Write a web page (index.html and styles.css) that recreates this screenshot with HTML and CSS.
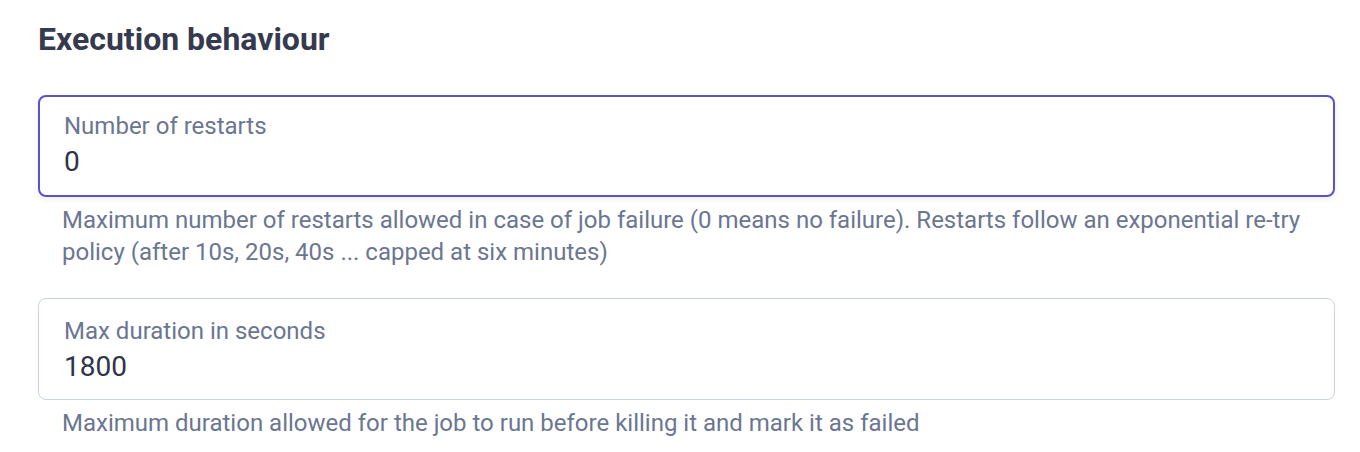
FILE: index.html
```html
<!DOCTYPE html>
<html>
<head>
<meta charset="utf-8">
<link rel="stylesheet" href="styles.css">
</head>
<body>
<section class="section">
  <h2 class="title">Execution behaviour</h2>
  <div class="field">
    <div class="box box-focus">
      <label class="label">Number of restarts</label>
      <div class="value">0</div>
    </div>
    <p class="help">Maximum number of restarts allowed in case of job failure (0 means no failure). Restarts follow an exponential re-try policy (after 10s, 20s, 40s ... capped at six minutes)</p>
  </div>
  <div class="field">
    <div class="box">
      <label class="label">Max duration in seconds</label>
      <div class="value">1800</div>
    </div>
    <p class="help">Maximum duration allowed for the job to run before killing it and mark it as failed</p>
  </div>
</section>
</body>
</html>
```
FILE: styles.css
```css
html, body { margin: 0; padding: 0; background: #fff; }
body { font-family: Roboto, "Noto Sans", sans-serif; }
.section { padding: 20px 25px 0 38px; }
.title { margin: 0 0 37px; font-size: 32px; font-weight: 700; color: #363a4f; line-height: 38px; }
.field { margin-bottom: 30px; }
.box {
  box-sizing: border-box;
  border: 1px solid #c9d2e4;
  border-radius: 8px;
  height: 102px;
  padding: 18px 25px 0 25px;
  width: 1297px;
}
.box-focus { border: 2px solid #5b50d0; padding: 15px 24px 0 24px; box-shadow: 0 2px 6px rgba(0,0,0,0.07); }
.label { display: block; font-size: 24px; line-height: 28px; color: #6b7691; }
.value { margin-top: 4px; font-size: 28px; line-height: 36px; color: #2f3447; }
.help { margin: 7px 0 0 24px; font-size: 24px; line-height: 32px; color: #6b7691; }
```
